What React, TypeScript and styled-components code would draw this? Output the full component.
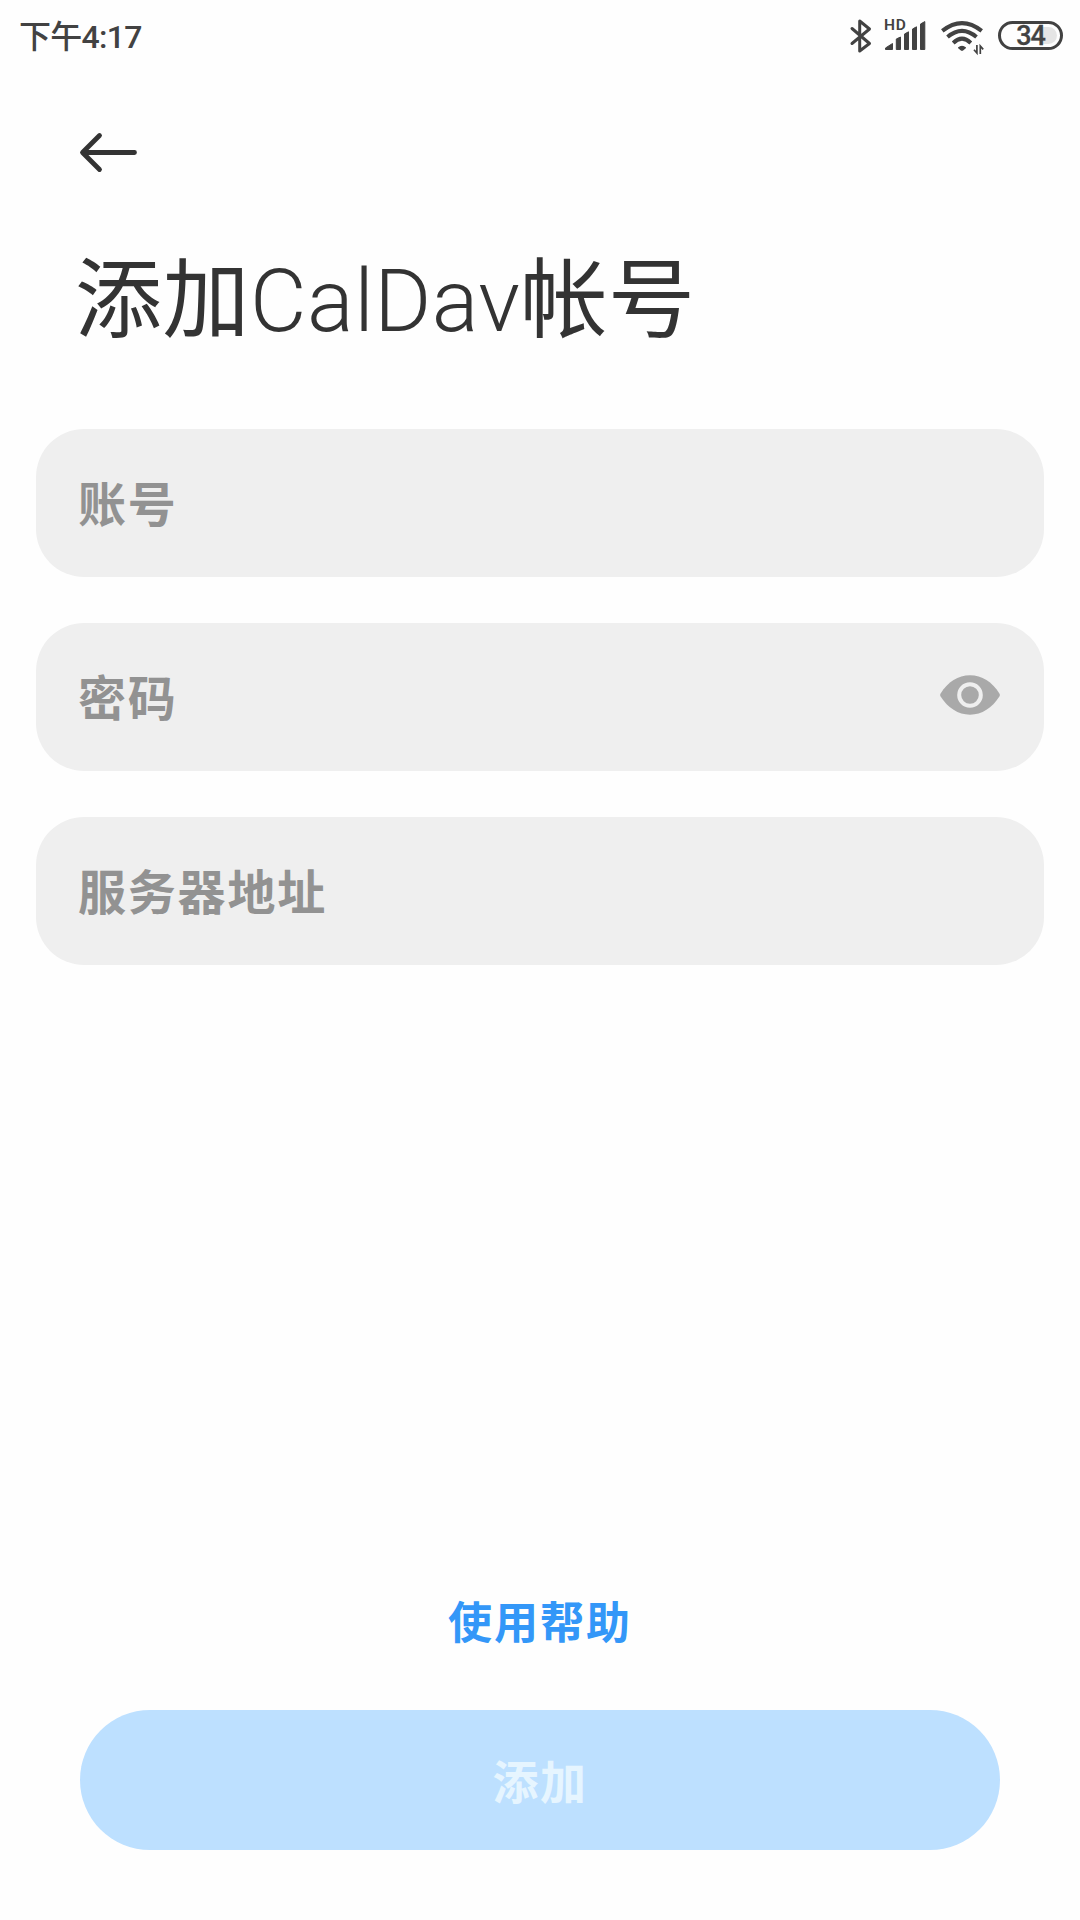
import React, { useState } from "react";
import styled, { createGlobalStyle } from "styled-components";

const GlobalStyle = createGlobalStyle`
  html, body { margin: 0; padding: 0; background: #fefefe; }
  *, *::before, *::after { box-sizing: border-box; }
`;

const fontStack = `Roboto, "Noto Sans CJK SC", sans-serif`;

const Screen = styled.main`
  width: 1080px;
  height: 1920px;
  display: flex;
  flex-direction: column;
  background: #fefefe;
  font-family: ${fontStack};
  color: #333;
  overflow: hidden;
`;

const StatusBar = styled.header`
  height: 72px;
  flex: none;
  display: flex;
  justify-content: space-between;
  align-items: flex-start;
  padding: 0 16px 0 19px;
  color: #424242;
`;

const Clock = styled.time`
  padding-top: 17px;
  font-size: 32px;
  line-height: 40px;
  font-weight: 500;
  letter-spacing: -0.7px;
`;

const StatusIcons = styled.div`
  display: flex;
  height: 72px;
`;

const Glyph = styled.svg`
  display: block;
  flex: none;
`;

const Signal = styled.div`
  position: relative;
  width: 56px;
  height: 72px;
`;

const SignalTag = styled.span`
  position: absolute;
  left: 3px;
  top: 16px;
  font-size: 15.5px;
  line-height: 18px;
  font-weight: 600;
  letter-spacing: 0.8px;
`;

const BatteryShell = styled.div`
  width: 65px;
  height: 29px;
  margin-top: 21px;
  margin-right: 1px;
  border: 3px solid #424242;
  border-radius: 15px;
  padding: 3px;
  display: flex;
  align-items: center;
`;

const BatteryTrack = styled.div`
  flex: 1;
  height: 17px;
  border-radius: 9px;
  background: linear-gradient(90deg, #fefefe 37px, #e5e5e5 37px);
  display: flex;
  align-items: center;
  justify-content: center;
`;

const BatteryLevel = styled.span`
  font-size: 27px;
  line-height: 28px;
  font-weight: 500;
  letter-spacing: -1px;
  -webkit-text-stroke: 0.3px #424242;
`;

const BackButton = styled.button`
  width: 60px;
  height: 44px;
  margin: 58px 0 0 78px;
  padding: 0;
  border: 0;
  background: none;
  flex: none;
`;

const Title = styled.h1`
  margin: 69px 0 0 75px;
  height: 116px;
  flex: none;
  display: flex;
  font-size: 87px;
  line-height: 116px;
  font-weight: 400;
  letter-spacing: 0.5px;
  white-space: nowrap;
`;

const TitleLatin = styled.span`
  font-weight: 300;
`;

const Form = styled.form`
  margin-top: 70px;
  padding: 0 36px;
  display: flex;
  flex-direction: column;
  gap: 46px;
`;

const Field = styled.label`
  height: 148px;
  border-radius: 48px;
  background: #efefef;
  display: flex;
  align-items: center;
  justify-content: space-between;
  padding: 0 44px 0 42px;
`;

const FieldLabel = styled.span`
  padding-top: 6px;
  font-size: 48px;
  line-height: 60px;
  font-weight: 700;
  letter-spacing: 1.8px;
  color: #929292;
`;

const RevealButton = styled.button`
  width: 60px;
  height: 40px;
  margin-bottom: 4px;
  padding: 0;
  border: 0;
  background: none;
`;

const Footer = styled.footer`
  margin-top: auto;
  padding: 0 80px 70px;
  display: flex;
  flex-direction: column;
  align-items: center;
  gap: 56px;
`;

const HelpLink = styled.a`
  font-size: 44px;
  line-height: 60px;
  font-weight: 700;
  letter-spacing: 2px;
  color: #3397f8;
`;

const SubmitButton = styled.button`
  width: 100%;
  height: 140px;
  padding: 0 0 2px;
  border: 0;
  border-radius: 70px;
  background: #bde0ff;
  font-family: ${fontStack};
  font-size: 46px;
  font-weight: 700;
  letter-spacing: 1.5px;
  color: #e6f5ff;
`;

const BluetoothIcon = () => (
  <Glyph width="36" height="72" viewBox="845 0 36 72" fill="none" stroke="#424242" strokeWidth="3" strokeLinecap="round" strokeLinejoin="round">
    <path d="M852 28.5 869.5 43.5 859.7 51V21L869.5 29 852 43.5" />
  </Glyph>
);

const SignalIcon = () => (
  <Signal>
    <Glyph width="56" height="72" viewBox="881 0 56 72" fill="#424242" stroke="#424242" strokeWidth="1" strokeLinejoin="round">
      <path d="M885.5 49.5V48L892.5 43.5V49.5ZM896.3 49.5V39L900.5 37V49.5ZM904.5 49.5V34L908.5 31.8V49.5ZM912.5 49.5V29L916.5 26.8V49.5ZM920.5 49.5V24L924.8 21.6V49.5Z" />
    </Glyph>
    <SignalTag>HD</SignalTag>
  </Signal>
);

const WifiIcon = () => (
  <Glyph width="61" height="72" viewBox="937 0 61 72" fill="none" stroke="#424242" strokeWidth="4">
    <path d="M942.3 30.9Q962 15.3 981.7 30.9M947.5 37Q962 24.7 976.5 37M953.2 43Q962 34.4 970.8 43" />
    <path d="M958.6 47.8Q962 44.9 965.4 47.8L962.7 50Q962 50.5 961.3 50Z" fill="#424242" strokeWidth="1.2" strokeLinejoin="round" />
    <path d="M976.9 45V53L974 49.8M980.3 54V46L983.2 49.4" strokeWidth="1.7" />
  </Glyph>
);

const EyeIcon = () => (
  <Glyph width="60" height="40" viewBox="0 0 60 40">
    <path d="M0.6 18.4C8 7 18 0.3 30 0.3S52 7 59.4 18.4Q60.4 20 59.4 21.6C52 33 42 39.7 30 39.7S8 33 0.6 21.6Q-.4 20 .6 18.4Z" fill="#a9a9a9" />
    <circle cx="30" cy="20" r="10.8" fill="#a9a9a9" stroke="#efefef" strokeWidth="4" />
  </Glyph>
);

const fields = [
  { label: "账号" },
  { label: "密码", secret: true },
  { label: "服务器地址" },
];

export default function App() {
  const [revealed, setRevealed] = useState(false);
  return (
    <>
      <GlobalStyle />
      <Screen>
        <StatusBar>
          <Clock>下午4:17</Clock>
          <StatusIcons>
            <BluetoothIcon />
            <SignalIcon />
            <WifiIcon />
            <BatteryShell>
              <BatteryTrack>
                <BatteryLevel>34</BatteryLevel>
              </BatteryTrack>
            </BatteryShell>
          </StatusIcons>
        </StatusBar>
        <BackButton>
          <Glyph width="60" height="44" viewBox="0 0 60 44" fill="none" stroke="#333" strokeWidth="4.8" strokeLinecap="round" strokeLinejoin="round">
            <path d="M56.5 22.5H5M21.5 5.5 4.5 22.5 21.5 39.5" />
          </Glyph>
        </BackButton>
        <Title>
          添加<TitleLatin>CalDav</TitleLatin>帐号
        </Title>
        <Form>
          {fields.map(({ label, secret }) => (
            <Field key={label}>
              <FieldLabel>{label}</FieldLabel>
              {secret && (
                <RevealButton type="button" aria-pressed={revealed} onClick={() => setRevealed((v) => !v)}>
                  <EyeIcon />
                </RevealButton>
              )}
            </Field>
          ))}
        </Form>
        <Footer>
          <HelpLink>使用帮助</HelpLink>
          <SubmitButton disabled>添加</SubmitButton>
        </Footer>
      </Screen>
    </>
  );
}
